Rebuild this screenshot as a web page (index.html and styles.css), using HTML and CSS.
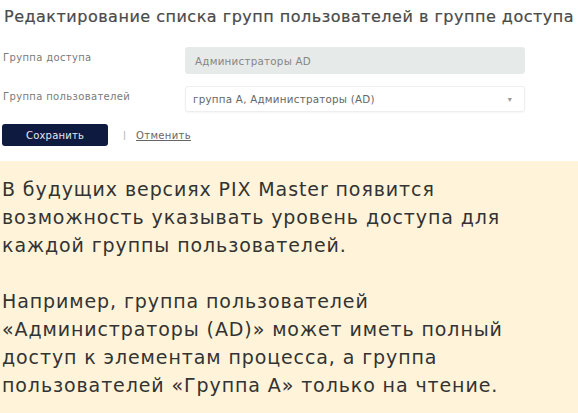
FILE: index.html
```html
<!DOCTYPE html>
<html lang="ru">
<head>
<meta charset="utf-8">
<link rel="stylesheet" href="styles.css">
</head>
<body>
<div class="page">
  <section class="form-card">
    <h1 class="title">Редактирование списка групп пользователей в группе доступа</h1>
    <div class="row">
      <span class="label">Группа доступа</span>
      <div class="field field-disabled">Администраторы AD</div>
    </div>
    <div class="row">
      <span class="label">Группа пользователей</span>
      <div class="field field-select">
        <span>группа А, Администраторы (AD)</span>
        <span class="caret">▾</span>
      </div>
    </div>
    <div class="actions">
      <button class="btn">Сохранить</button>
      <span class="sep">|</span>
      <a class="cancel">Отменить</a>
    </div>
  </section>
  <div class="divider"></div>
  <section class="note">
    <p>В будущих версиях PIX Master появится<br>возможность указывать уровень доступа для<br>каждой группы пользователей.</p>
    <p>Например, группа пользователей<br>«Администраторы (AD)» может иметь полный<br>доступ к элементам процесса, а группа<br>пользователей «Группа А» только на чтение.</p>
  </section>
</div>
</body>
</html>
```

FILE: styles.css
```css
* { box-sizing: border-box; }
html, body { margin: 0; padding: 0; background: #fff; }
body { font-family: "DejaVu Sans", "Open Sans", sans-serif; width: 578px; height: 413px; overflow: hidden; }
.page { display: flex; flex-direction: column; height: 413px; }
.form-card { padding: 6px 4px 0 3px; }
.title { margin: 0 0 0 1px; font-size: 16px; font-weight: 400; color: #4a4a4a; line-height: 22px; letter-spacing: 0.5px; white-space: nowrap; -webkit-text-stroke: 0.2px #4a4a4a; }
.row { display: flex; align-items: flex-start; }
.row:nth-of-type(1) { margin-top: 19px; }
.row + .row { margin-top: 12px; }
.label { width: 182px; font-size: 10px; color: #7a7a7a; padding-left: 0; padding-top: 5px; letter-spacing: 0.35px; }
.field { width: 340px; height: 27px; border-radius: 3px; font-size: 10.3px; display: flex; align-items: center; padding: 0 10px; letter-spacing: 0.25px; }
.field-disabled { background: #e6ebea; color: #858585; }
.field-select { height: 26px; background: #fff; border: 1px solid #eeeeee; color: #666; justify-content: space-between; padding-left: 7px; box-shadow: 0 1px 2px rgba(0,0,0,0.04); }
.caret { font-size: 8px; color: #999; margin-right: 2px; }
.actions { display: flex; align-items: center; margin-top: 12px; }
.btn { width: 106px; height: 22px; border: 0; border-radius: 3px; background: #0e1a40; color: #e4e7ef; font-family: inherit; font-size: 10px; padding: 0; margin-left: -1px; letter-spacing: 0.2px; }
.sep { margin-left: 15px; font-size: 9px; color: #aaa; }
.cancel { margin-left: 10px; font-size: 10px; color: #666; text-decoration: underline; letter-spacing: 0.35px; }
.divider { margin-top: 9px; height: 5px; background: linear-gradient(#a5a5a5, #cfcfcf 45%, #fff); }
.note { flex: 1; margin-top: 6px; background: #fff4d9; padding: 14px 6px 0 2px; color: #333; font-size: 19px; line-height: 28px; letter-spacing: 0.9px; white-space: nowrap; }
.note p { margin: 0 0 28px 0; }
```
